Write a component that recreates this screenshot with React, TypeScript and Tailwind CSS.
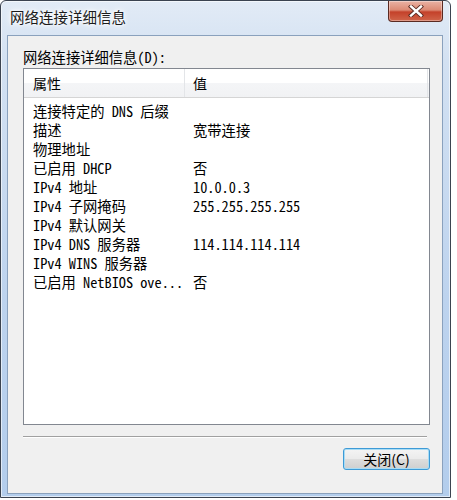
const rows: [string, string][] = [
  ["连接特定的 DNS 后缀", ""],
  ["描述", "宽带连接"],
  ["物理地址", ""],
  ["已启用 DHCP", "否"],
  ["IPv4 地址", "10.0.0.3"],
  ["IPv4 子网掩码", "255.255.255.255"],
  ["IPv4 默认网关", ""],
  ["IPv4 DNS 服务器", "114.114.114.114"],
  ["IPv4 WINS 服务器", ""],
  ["已启用 NetBIOS ove...", "否"],
];

const mono =
  "font-['Noto_Sans_Mono_CJK_SC','Noto_Sans_CJK_SC','Liberation_Mono',monospace]";
const sans = "font-['Noto_Sans_CJK_SC','Noto_Sans',sans-serif]";

function CloseButton() {
  return (
    <div className="flex h-[21px] w-[55px] items-center justify-center rounded-b-[4px] border border-t-0 border-[#5a2a22] bg-[linear-gradient(180deg,#eab2a4_0%,#dc8a74_45%,#c4412a_55%,#d0654a_100%)] shadow-[inset_0_0_0_1px_rgba(255,255,255,0.35)]">
      <svg width="16" height="12" viewBox="0 0 16 12">
        <path
          d="M3 1.5 L13 10.5 M13 1.5 L3 10.5"
          stroke="#5a2a22"
          strokeWidth="4.2"
          strokeLinecap="square"
        />
        <path
          d="M3 1.5 L13 10.5 M13 1.5 L3 10.5"
          stroke="#ffffff"
          strokeWidth="2.4"
          strokeLinecap="square"
        />
      </svg>
    </div>
  );
}

export default function App() {
  return (
    <div className="h-[500px] w-[457px] bg-white">
      <div className="flex h-[498px] w-[451px] flex-col rounded-t-[6px] border border-[#3b4350] bg-[linear-gradient(180deg,#e2ebf6_0%,#d3e1f2_12%,#bdd3ee_60%,#b3cdec_100%)] shadow-[inset_0_0_0_1px_rgba(255,255,255,0.6)]">
        <div className="flex h-[34px] items-start justify-between pl-[9px] pr-[7px]">
          <div
            className={`${sans} mt-[6px] text-[14.5px] leading-[20px] text-[#1b1b1b] [text-shadow:0_0_8px_#ffffff,0_0_5px_#ffffff,0_0_3px_#ffffff]`}
          >
            网络连接详细信息
          </div>
          <CloseButton />
        </div>

        <div className="mb-[3px] ml-[6px] mr-[7px] flex flex-1 flex-col border border-[#8aa1bd] bg-[#f0f0f0] pl-[15px] pr-[12px]">
          <div className={`${mono} mt-[13px] h-[19px] text-[14.3px] leading-[16px] text-black`}>
            网络连接详细信息(D):
          </div>

          <div className="h-[357px] border border-[#828790] bg-white">
            <div className={`${sans} flex h-[29px] border-b border-[#d5d5d5] bg-[linear-gradient(180deg,#ffffff_0%,#ffffff_50%,#f4f5f7_51%,#f1f2f4_100%)] text-[14px] leading-[28px] text-black`}>
              <div className="w-[161px] border-r border-[#e3e5e8] pl-[9px]">属性</div>
              <div className="w-[243px] border-r border-[#e3e5e8] pl-[8px]">值</div>
            </div>
            <div className={`${mono} pt-[3px] text-[14.3px] leading-[19px] text-black`}>
              {rows.map(([k, v]) => (
                <div key={k} className="flex h-[19px] whitespace-pre">
                  <div className="w-[162px] overflow-hidden pl-[9px]">{k}</div>
                  <div className="pl-[7px]">{v}</div>
                </div>
              ))}
            </div>
          </div>

          <div className="mt-[11px] w-[404px] border-t border-b border-t-[#a0a0a0] border-b-white" />

          <div className="mt-[10px] flex justify-end">
            <button
              className={`${sans} h-[22px] w-[87px] rounded-[3px] border border-[#3d9ad6] bg-[linear-gradient(180deg,#f4f4f4_0%,#ebebeb_48%,#dddddd_52%,#cfcfcf_100%)] text-[14px] leading-[18px] text-black shadow-[inset_0_0_0_1px_#a8dcf5]`}
            >
              关闭(C)
            </button>
          </div>
        </div>
      </div>
    </div>
  );
}
